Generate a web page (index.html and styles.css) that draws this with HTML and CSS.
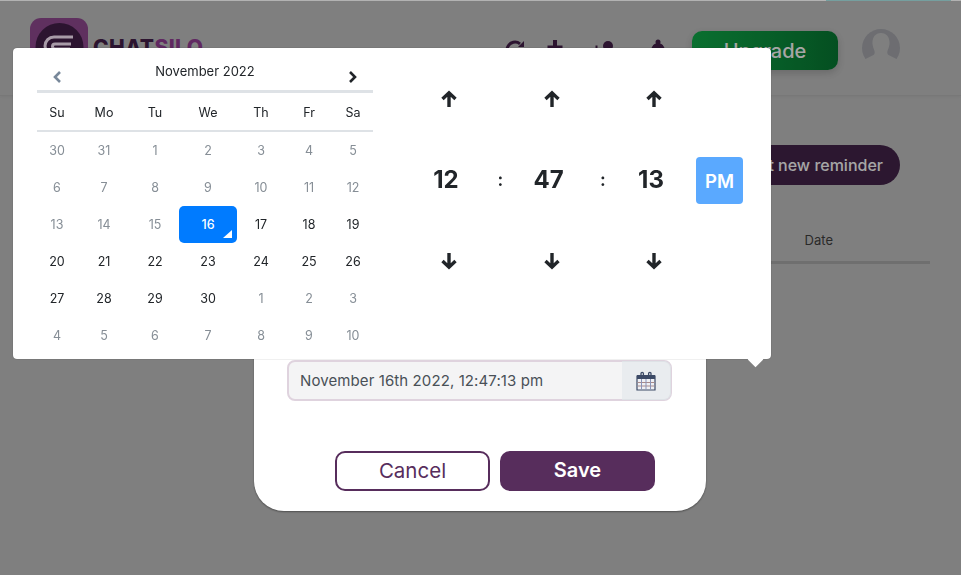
FILE: index.html
```html
<!DOCTYPE html>
<html lang="en">
<head>
<meta charset="utf-8">
<title>Reminder date picker</title>
<link rel="stylesheet" href="styles.css">
</head>
<body>
<div class="page">
  <header class="topbar">
    <div class="brand">
      <svg class="logo" viewBox="0 0 58 58" width="58" height="58"><rect width="58" height="58" rx="11" fill="#884589"/><circle cx="29.500" cy="29" r="24" fill="#3f1e45"/><path d="M43 19H24a9 9 0 0 0 0 18h14a6 6 0 0 1 0 12H20" fill="none" stroke="#f1dff1" stroke-width="3"/><path d="M41 26H25a2.500 2.500 0 0 0 0 5h15" fill="none" stroke="#f1dff1" stroke-width="3"/></svg>
      <span class="brand-name"><span class="brand-dark">CHAT</span><span class="brand-light">SILO</span></span>
    </div>
    <nav class="top-actions">
      <svg class="top-icon icon-refresh" viewBox="0 0 24 24" width="24" height="24"><path d="M20 12a8 8 0 1 1-3-6.200" fill="none" stroke="#3f1e45" stroke-width="3"/><path d="M21 3v6h-6z" fill="#3f1e45"/></svg>
      <svg class="top-icon icon-plus" viewBox="0 0 24 24" width="24" height="24"><path d="M12 2v16M4.500 9.500h15" stroke="#3f1e45" stroke-width="4"/></svg>
      <svg class="top-icon icon-person" viewBox="0 0 24 24" width="24" height="24"><circle cx="15" cy="8" r="5" fill="#3f1e45"/><path d="M7 22a8 8 0 0 1 16 0z" fill="#3f1e45"/><path d="M0 11h7M3.500 7.500v7" stroke="#3f1e45" stroke-width="2"/></svg>
      <svg class="top-icon icon-bell" viewBox="0 0 24 24" width="24" height="24"><circle cx="12" cy="4" r="2.500" fill="#3f1e45"/><path d="M4 20c0-10 3-15 8-15s8 5 8 15z" fill="#3f1e45"/></svg>
      <button class="upgrade">Upgrade</button>
      <svg class="avatar" viewBox="0 0 38 38" width="38" height="38"><circle cx="19" cy="19" r="19" fill="#9c9da3"/><path d="M19 4c-6 0-9 5-8.500 11 .3 3 1.500 5 2 7 .5 2 0 3-1 4l-12 6v8h39v-8l-12-6c-1-1-1.500-2-1-4 .5-2 1.700-4 2-7 .5-6-2.500-11-8.500-11z" fill="#b7b7b7"/></svg>
    </nav>
  </header>
  <main class="content">
    <div class="toolbar"><button class="add-reminder">Set new reminder</button></div>
    <div class="table-head"><span class="date-col">Date</span></div>
  </main>
</div>

<div class="overlay"></div>

<section class="modal">
  <div class="date-field">
    <span class="date-value">November 16th 2022, 12:47:13 pm</span>
    <span class="date-addon">
      <svg viewBox="0 0 20 20" width="20" height="20">
        <path d="M1 5h18v14H1z" fill="#eef0f4" stroke="#3c4a66" stroke-width="1.200"/>
        <path d="M1 4h18v4H1z" fill="#3c4a66"/>
        <path d="M5 5V2.500a1.200 1.200 0 0 1 2.400 0V5M12.600 5V2.500a1.200 1.200 0 0 1 2.400 0V5" fill="none" stroke="#3c4a66" stroke-width="1.300"/>
        <path d="M1.500 11.500h17M1.500 15h17" stroke="#a98a8a"/>
        <path d="M5.500 8v10.500M10 8v10.500M14.500 8v10.500" stroke="#8a94b8"/>
      </svg>
    </span>
  </div>
  <div class="modal-actions">
    <button class="btn btn-cancel">Cancel</button>
    <button class="btn btn-save">Save</button>
  </div>
</section>

<section class="picker">
  <div class="calendar">
    <div class="cal-head">
      <svg class="chev" viewBox="0 0 12 14" width="12" height="14"><path d="M9 2 4 7l5 5" fill="none" stroke="#78889a" stroke-width="2.600"/></svg>
      <span class="cal-title">November 2022</span>
      <svg class="chev" viewBox="0 0 12 14" width="12" height="14"><path d="M3 2l5 5-5 5" fill="none" stroke="#212529" stroke-width="2.600"/></svg>
    </div>
    <table class="cal-grid">
      <thead><tr><th>Su</th><th>Mo</th><th>Tu</th><th>We</th><th>Th</th><th>Fr</th><th>Sa</th></tr></thead>
      <tbody>
        <tr class="first-row"><td class="off">30</td><td class="off">31</td><td class="off">1</td><td class="off">2</td><td class="off">3</td><td class="off">4</td><td class="off">5</td></tr>
        <tr><td class="off">6</td><td class="off">7</td><td class="off">8</td><td class="off">9</td><td class="off">10</td><td class="off">11</td><td class="off">12</td></tr>
        <tr><td class="off">13</td><td class="off">14</td><td class="off">15</td><td class="active">16</td><td>17</td><td>18</td><td>19</td></tr>
        <tr><td>20</td><td>21</td><td>22</td><td>23</td><td>24</td><td>25</td><td>26</td></tr>
        <tr><td>27</td><td>28</td><td>29</td><td>30</td><td class="off">1</td><td class="off">2</td><td class="off">3</td></tr>
        <tr><td class="off">4</td><td class="off">5</td><td class="off">6</td><td class="off">7</td><td class="off">8</td><td class="off">9</td><td class="off">10</td></tr>
      </tbody>
    </table>
  </div>
  <div class="clock">
    <div class="clock-col">
      <svg class="arrow" viewBox="0 0 18 18" width="18" height="18"><path d="M9 17V3M2.500 9 9 2.800 15.500 9" fill="none" stroke="#212529" stroke-width="3.400"/></svg>
      <span class="clock-num">12</span>
      <svg class="arrow" viewBox="0 0 18 18" width="18" height="18"><path d="M9 1v14M2.500 9 9 15.200 15.500 9" fill="none" stroke="#212529" stroke-width="3.400"/></svg>
    </div>
    <span class="clock-sep">:</span>
    <div class="clock-col">
      <svg class="arrow" viewBox="0 0 18 18" width="18" height="18"><path d="M9 17V3M2.500 9 9 2.800 15.500 9" fill="none" stroke="#212529" stroke-width="3.400"/></svg>
      <span class="clock-num">47</span>
      <svg class="arrow" viewBox="0 0 18 18" width="18" height="18"><path d="M9 1v14M2.500 9 9 15.200 15.500 9" fill="none" stroke="#212529" stroke-width="3.400"/></svg>
    </div>
    <span class="clock-sep">:</span>
    <div class="clock-col">
      <svg class="arrow" viewBox="0 0 18 18" width="18" height="18"><path d="M9 17V3M2.500 9 9 2.800 15.500 9" fill="none" stroke="#212529" stroke-width="3.400"/></svg>
      <span class="clock-num">13</span>
      <svg class="arrow" viewBox="0 0 18 18" width="18" height="18"><path d="M9 1v14M2.500 9 9 15.200 15.500 9" fill="none" stroke="#212529" stroke-width="3.400"/></svg>
    </div>
    <span class="ampm">PM</span>
  </div>
  <span class="picker-tip"></span>
</section>
```
FILE: styles.css
```css
* { box-sizing: border-box; }
html, body { margin: 0; height: 100%; overflow: hidden; }
body { font-family: "Inter", "Liberation Sans", sans-serif; color: #212529; background: #b7b7b7; }
button { font: inherit; border: 0; }

.page { height: 575px; display: flex; flex-direction: column; background: linear-gradient(90deg, #fff 0 86%, #a8e4e4 86% 99%, #fff 99%) top / 100% 1px no-repeat #b7b7b7; }
.topbar { height: 96px; padding: 18px 61px 0 30px; display: flex; justify-content: space-between; border-bottom: 1px solid #adadad; box-shadow: 0 1px 3px rgba(0,0,0,.05); }
.brand { display: flex; align-items: flex-start; gap: 5px; }
.logo { display: block; }
.brand-name { font: 800 21px "Inter", sans-serif; margin-top: 17px; letter-spacing: .4px; }
.brand-dark { color: #3f1e45; }
.brand-light { color: #8a3a8c; }
.top-actions { display: flex; align-items: flex-start; }
.top-icon { display: block; margin-top: 20px; }
.icon-plus { margin-left: 16px; }
.icon-person { margin-left: 26px; }
.icon-bell { margin-left: 29px; }
.upgrade { width: 146px; height: 39px; margin: 13px 0 0 22px; border-radius: 10px; color: #eee; font-weight: 500; font-size: 20px; background: linear-gradient(90deg, #0fa045, #077230); box-shadow: 0 3px 8px rgba(0,0,0,.18); }
.avatar { display: block; margin: 11px 0 0 24px; }

.content { flex: 1; padding: 49px 31px 0 0; display: flex; flex-direction: column; align-items: flex-end; }
.add-reminder { height: 40px; padding: 0 17px; margin-right: 30px; border-radius: 20px; color: #eee; background: #3f2245; font-size: 16px; font-weight: 500; }
.toolbar { display: flex; }
.table-head { width: 400px; height: 44px; margin-top: 35px; padding-bottom: 2px; border-bottom: 3px solid #9f9f9f; display: flex; justify-content: flex-end; align-items: center; }
.date-col { font-size: 13px; margin-right: 97px; color: #3c3c3c; }

.overlay { position: fixed; inset: 0; background: rgba(0,0,0,.3); }

.modal { position: fixed; left: 254px; top: 300px; width: 452px; height: 211px; padding: 60px 33px 0; background: #fff; border-radius: 0 0 30px 30px; box-shadow: 0 1px 2px rgba(0,0,0,.4); }
.date-field { width: 385px; height: 41px; display: flex; border: 2px solid #dfd3de; border-radius: 8px; background: #f4f4f5; }
.date-value { flex: 1; padding-left: 11px; line-height: 37px; font-size: 15px; letter-spacing: .1px; color: #495057; }
.date-addon { width: 49px; margin: -1px -1px -1px 0; display: flex; align-items: center; justify-content: center; background: #e9ecef; border: 1px solid #dee2e6; border-left: 0; border-radius: 0 7px 7px 0; }
.modal-actions { margin-top: 50px; padding-right: 18px; display: flex; justify-content: flex-end; gap: 10px; }
.btn { width: 155px; height: 40px; padding-bottom: 3px; border-radius: 10px; font-size: 20px; }
.btn-cancel { background: #fff; color: #572d5c; border: 2px solid #572d5c; font-size: 20.500px; }
.btn-save { background: #572d5c; color: #fff; font-weight: 600; }

.picker { position: fixed; left: 13px; top: 48px; width: 758px; height: 311px; padding: 0 24px; background: #fff; border-radius: 4px; box-shadow: 0 0 1px rgba(0,0,0,.6); display: flex; }
.picker-tip { position: absolute; left: 736.500px; bottom: -5.500px; width: 11px; height: 11px; background: #fff; transform: rotate(45deg); }
.calendar { flex: none; width: 336px; }
.cal-head { height: 45px; padding: 0 14px; display: flex; justify-content: space-between; border-bottom: 3px solid #dee2e6; }
.chev { display: block; margin-top: 22px; }
.cal-title { font-size: 13px; line-height: 16px; margin-top: 15px; }
.cal-grid { width: 336px; border-collapse: collapse; table-layout: fixed; font-size: 12.500px; }
.cal-grid th { height: 38px; padding: 2px 0 0; font-weight: 400; border-bottom: 2px solid #dee2e6; }
.cal-grid td { height: 37px; padding: 0; text-align: center; }
.cal-grid .first-row td { height: 38px; }
.cal-grid th:nth-child(1) { width: 40px; }
.cal-grid th:nth-child(2) { width: 54px; }
.cal-grid th:nth-child(3) { width: 48px; }
.cal-grid th:nth-child(4) { width: 58px; }
.cal-grid th:nth-child(5) { width: 48px; }
.cal-grid th:nth-child(6) { width: 48px; }
.cal-grid th:nth-child(7) { width: 40px; }
.cal-grid .off { color: #868e96; }
.cal-grid .active { position: relative; background: #007bff; color: #fff; font-weight: 500; border-radius: 5px; }
.cal-grid .active::after { content: ""; position: absolute; right: 5px; bottom: 5px; border-left: 9px solid transparent; border-bottom: 8px solid #fff; }

.clock { flex: 1; display: flex; align-items: flex-start; padding-left: 41px; }
.clock-col { flex: none; width: 70px; height: 311px; display: flex; flex-direction: column; align-items: center; }
.arrow { display: block; }
.clock-col .arrow:first-child { margin-top: 42px; }
.clock-num { margin: 56px 0 56px -6px; height: 32px; line-height: 32px; font-size: 24px; font-weight: 700; }
.clock-sep { flex: none; width: 32.500px; padding-top: 122px; line-height: 20px; text-align: center; font-size: 18px; font-weight: 600; }
.ampm { flex: none; width: 47px; height: 47px; margin: 109px 0 0 7px; padding-top: 1px; border-radius: 4px; background: #5aa9ff; color: #fff; display: flex; align-items: center; justify-content: center; font-size: 18.500px; font-weight: 600; }
```
